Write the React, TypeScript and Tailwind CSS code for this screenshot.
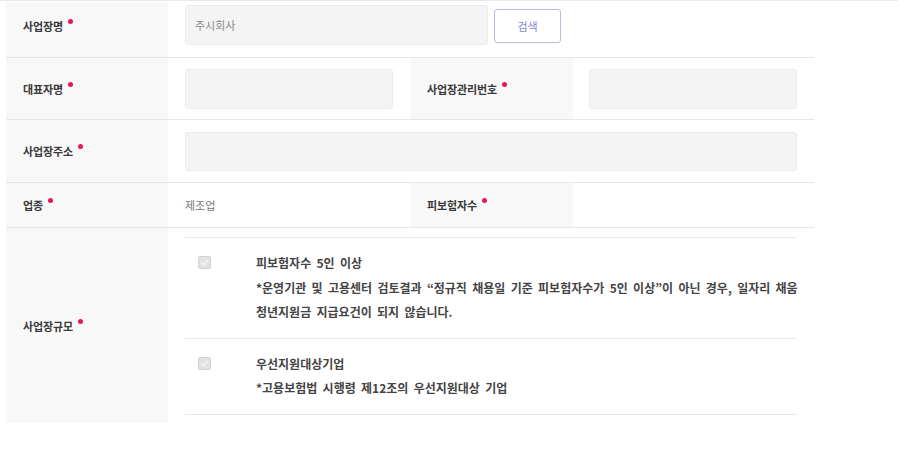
import React from "react";

const font = "font-['Noto_Sans_CJK_KR','Noto_Sans',sans-serif]";

function Label({ text, className = "" }: { text: string; className?: string }) {
  return (
    <div className={`flex items-start ${className}`}>
      <span className="text-[11px] leading-[16px] font-semibold text-[#3a3a3a] tracking-[-0.1px]">{text}</span>
      <span className="ml-[5px] mt-[1px] w-[5px] h-[5px] rounded-full bg-[#e5175a]" />
    </div>
  );
}

function Check() {
  return (
    <svg width="13" height="13" viewBox="0 0 13 13" className="shrink-0">
      <rect x="0.5" y="0.5" width="12" height="12" rx="1.5" fill="#e2e2e2" stroke="#d2d2d2" />
      <path d="M3.2 6.6 L5.4 8.8 L9.8 4.2" fill="none" stroke="#f4f4f4" strokeWidth="1.4" strokeLinecap="round" strokeLinejoin="round" />
    </svg>
  );
}

const inputCls = "bg-[#f4f4f4] border border-[#ebebeb] rounded-[3px]";
const bodyCls = "ml-[45px] text-[12px] leading-[24.5px] font-semibold text-[#444] [word-spacing:2.6px]";

export default function App() {
  return (
    <div className={`w-[898px] h-[471px] bg-white border-t border-[#e9e9e9] pt-[1px] ${font}`}>
      <div className="ml-[6px] w-[808px]">
        {/* Row 1 */}
        <div className="flex h-[56px] border-b border-[#e7e7e7]">
          <div className="w-[162px] bg-[#f8f8f8] pl-[17px] pt-[16px]">
            <Label text="사업장명" />
          </div>
          <div className="flex items-start pl-[17px] pt-[3px] gap-[6px]">
            <div className={`w-[303px] h-[40px] ${inputCls} flex items-center pl-[9px]`}>
              <span className="text-[11px] text-[#8a8a8a]">주시회사</span>
            </div>
            <div className="mt-[4px] w-[67px] h-[34px] rounded-[3px] border-[1.5px] border-[#b7baec] flex items-center justify-center">
              <span className="text-[11px] text-[#7f84cf]">검색</span>
            </div>
          </div>
        </div>

        {/* Row 2 */}
        <div className="flex h-[62px] border-b border-[#e7e7e7]">
          <div className="w-[162px] bg-[#f8f8f8] pl-[17px] flex items-center">
            <Label text="대표자명" />
          </div>
          <div className="w-[242px] pl-[17px] flex items-center">
            <div className={`w-[208px] h-[40px] ${inputCls}`} />
          </div>
          <div className="w-[163px] bg-[#f8f8f8] pl-[17px] flex items-center">
            <Label text="사업장관리번호" />
          </div>
          <div className="pl-[16px] flex items-center">
            <div className={`w-[208px] h-[40px] ${inputCls}`} />
          </div>
        </div>

        {/* Row 3 */}
        <div className="flex h-[63px] border-b border-[#e7e7e7]">
          <div className="w-[162px] bg-[#f8f8f8] pl-[17px] flex items-center">
            <Label text="사업장주소" />
          </div>
          <div className="pl-[17px] flex items-center">
            <div className={`w-[612px] h-[39px] ${inputCls}`} />
          </div>
        </div>

        {/* Row 4 */}
        <div className="flex h-[45px] border-b border-[#e7e7e7]">
          <div className="w-[162px] bg-[#f8f8f8] pl-[17px] flex items-center">
            <Label text="업종" />
          </div>
          <div className="w-[242px] pl-[17px] flex items-center">
            <span className="text-[11px] text-[#777]">제조업</span>
          </div>
          <div className="w-[163px] bg-[#f8f8f8] pl-[17px] flex items-center">
            <Label text="피보험자수" />
          </div>
        </div>

        {/* Row 5 */}
        <div className="flex h-[195px]">
          <div className="w-[162px] bg-[#f8f8f8] pl-[17px] flex items-center">
            <Label text="사업장규모" />
          </div>
          <div className="pl-[17px] pt-[9px]">
            <div className="w-[612px] border-t border-[#e7e7e7]">
              <div className="flex items-start border-b border-[#e7e7e7] pt-[13px] pb-[13px] pl-[13px]">
                <div className="mt-[5px]"><Check /></div>
                <div className={bodyCls}>
                  <div>피보험자수 5인 이상</div>
                  <div className="whitespace-nowrap">*운영기관 및 고용센터 검토결과 “정규직 채용일 기준 피보험자수가 5인 이상”이 아닌 경우, 일자리 채움</div>
                  <div>청년지원금 지급요건이 되지 않습니다.</div>
                </div>
              </div>
              <div className="flex items-start border-b border-[#e7e7e7] pt-[13px] pb-[13px] pl-[13px]">
                <div className="mt-[5px]"><Check /></div>
                <div className={bodyCls}>
                  <div>우선지원대상기업</div>
                  <div>*고용보험법 시행령 제12조의 우선지원대상 기업</div>
                </div>
              </div>
            </div>
          </div>
        </div>
      </div>
    </div>
  );
}
